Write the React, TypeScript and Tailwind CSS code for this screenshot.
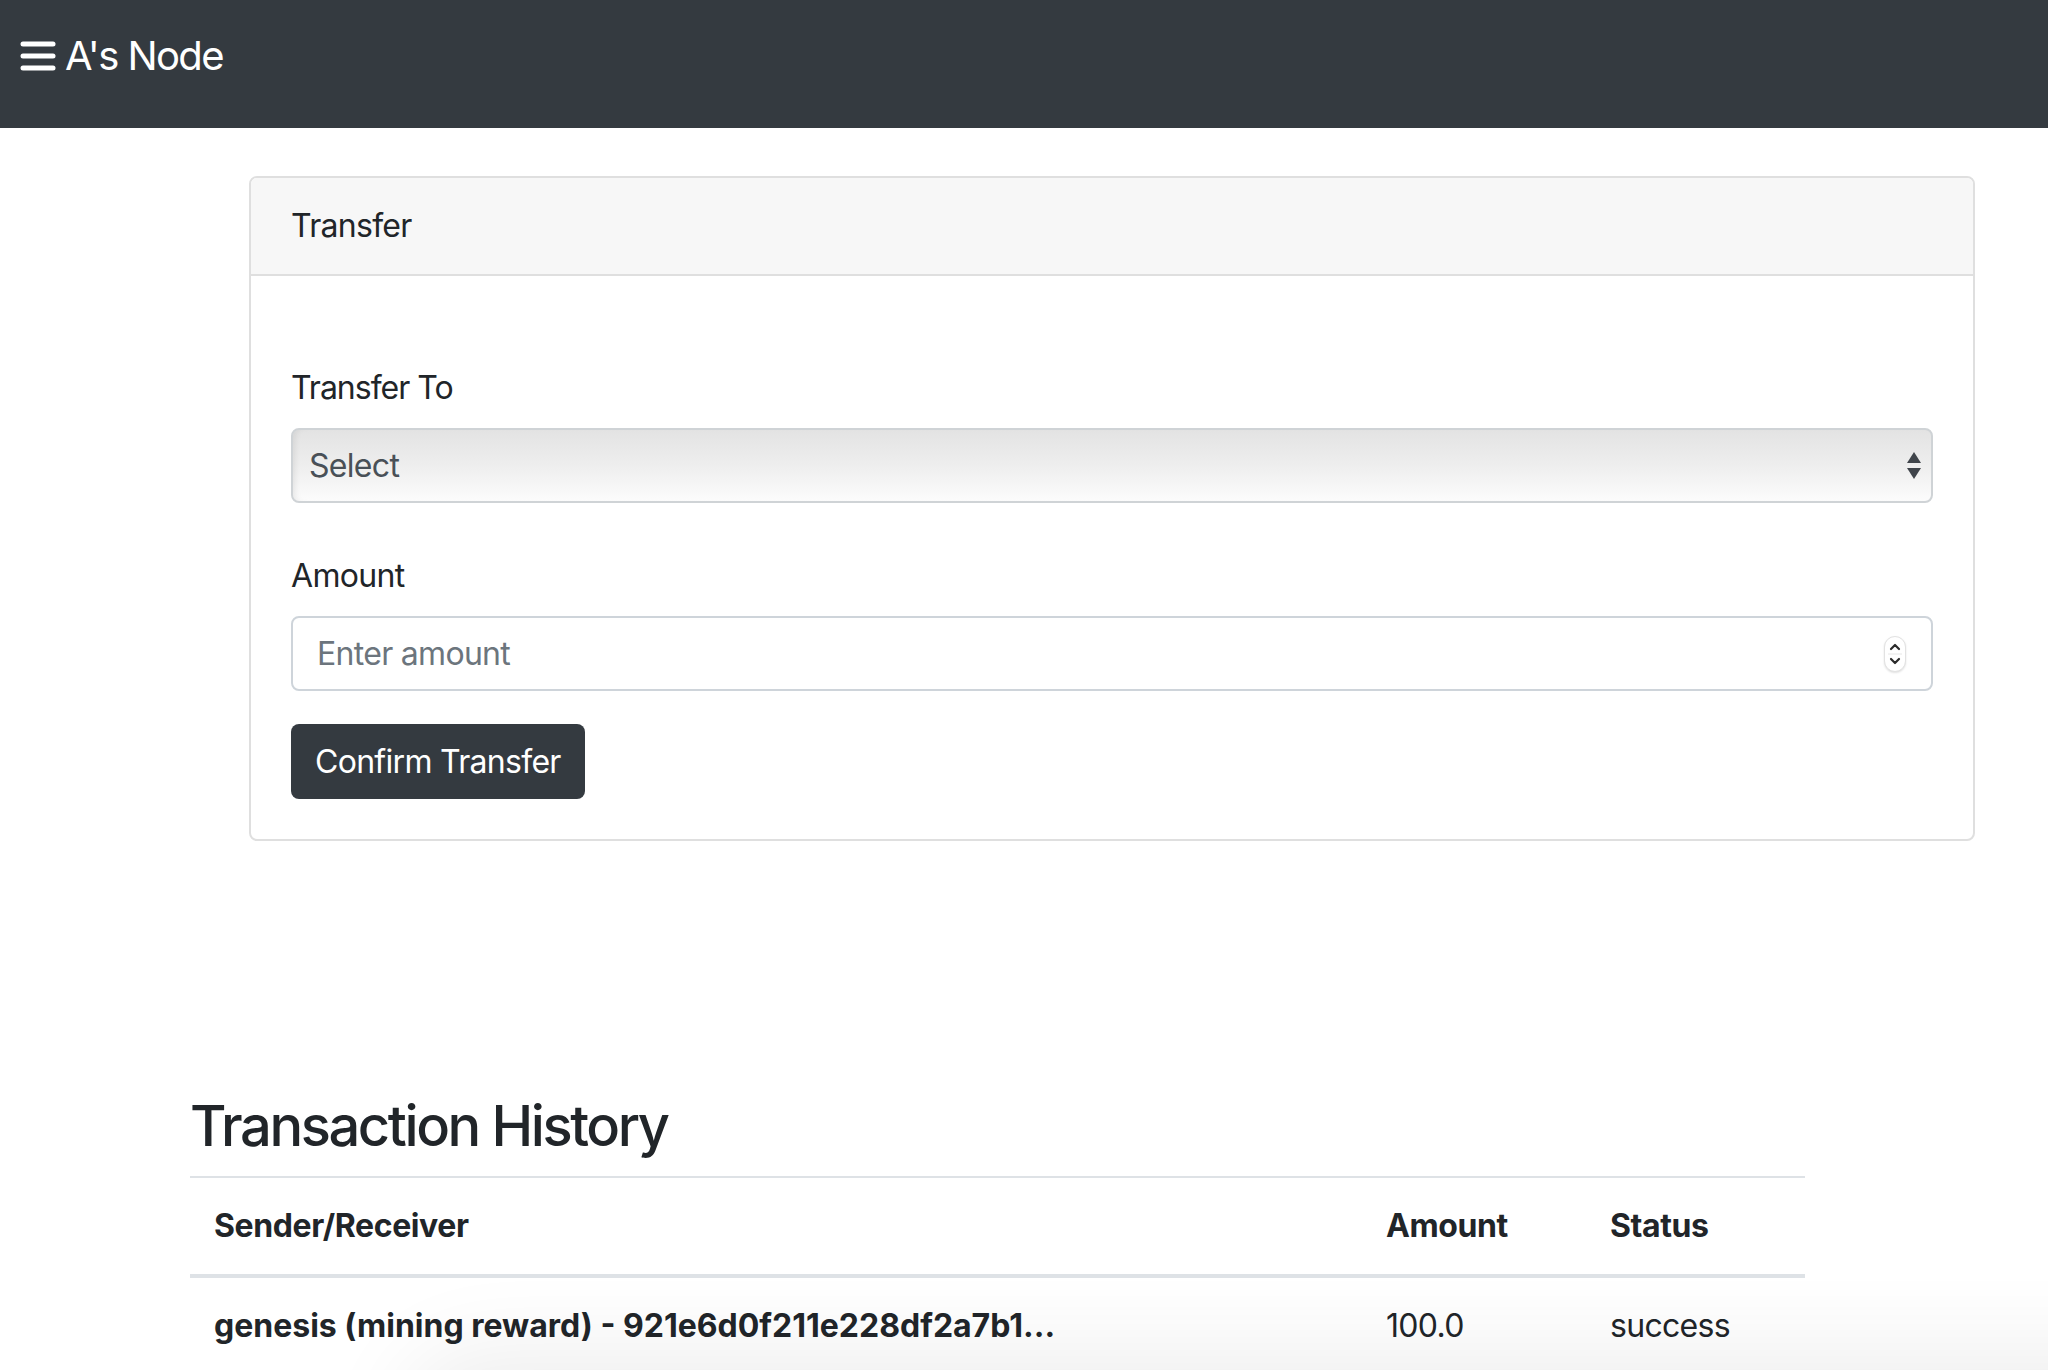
import React from 'react';

const font = "font-['Inter','Liberation_Sans',sans-serif]";

const MenuIcon = () => (
  <svg width="36" height="30" viewBox="0 0 36 30" className="shrink-0">
    <g stroke="white" strokeWidth="5" strokeLinecap="round">
      <line x1="3" y1="3" x2="33" y2="3" />
      <line x1="3" y1="15" x2="33" y2="15" />
      <line x1="3" y1="27" x2="33" y2="27" />
    </g>
  </svg>
);

const SelectArrows = () => (
  <svg width="16" height="30" viewBox="0 0 16 30" className="shrink-0">
    <polygon points="8,1 15,12 1,12" fill="#40454b" />
    <polygon points="1,17 15,17 8,28" fill="#40454b" />
  </svg>
);

const Spinner = () => (
  <div className="flex h-[36px] w-[22px] flex-col items-center justify-center rounded-[11px] border border-[#e2e2e2] bg-white shadow-[0_1px_2px_rgba(0,0,0,0.12)]">
    <svg width="14" height="30" viewBox="0 0 14 30">
      <g fill="none" stroke="#2a2a2a" strokeWidth="2.2" strokeLinecap="round" strokeLinejoin="round">
        <polyline points="3,10 7,6 11,10" />
        <polyline points="3,20 7,24 11,20" />
      </g>
      <line x1="0" y1="15" x2="14" y2="15" stroke="#e6e6e6" strokeWidth="1" />
    </svg>
  </div>
);

export default function App() {
  return (
    <div className={`relative h-[1370px] overflow-hidden bg-white text-[#212529] tracking-[-0.7px] ${font}`}>
      {/* Navbar */}
      <nav className="h-[128px] bg-[#343a40] pl-[20px] pt-[26px]">
        <div className="flex items-center gap-[9px]">
          <MenuIcon />
          <span className="text-[40px] leading-[60px] tracking-[-1.6px] text-white">A's Node</span>
        </div>
      </nav>

      {/* Transfer card */}
      <div className="ml-[249px] mt-[48px] w-[1726px] rounded-lg border-2 border-[#dfdfdf]">
        <div className="rounded-t-[6px] border-b-2 border-[#dfdfdf] bg-[#f7f7f7] px-[40px] py-[24px] text-[32px] leading-[48px]">
          Transfer
        </div>
        <div className="px-[40px] pb-[40px] pt-[88px]">
          <label className="mb-[16px] block text-[32px] leading-[48px] tracking-[-1px]">Transfer To</label>
          <div className="flex h-[75px] items-center justify-between rounded-lg border-2 border-[#cfd3d6] bg-gradient-to-b from-[#e3e3e3] via-[#eeeeee] to-[#fcfcfc] pl-[16px] pr-[9px] shadow-[inset_6px_0_6px_-4px_rgba(0,0,0,0.08)]">
            <span className="text-[32px] text-[#495057]">Select</span>
            <SelectArrows />
          </div>

          <label className="mb-[16px] mt-[49px] block text-[32px] leading-[48px]">Amount</label>
          <div className="flex h-[75px] items-center rounded-lg border-2 border-[#ced4da] bg-white pl-[24px] pr-[25px]">
            <input
              type="text"
              placeholder="Enter amount"
              className="min-w-0 flex-1 bg-transparent text-[32px] tracking-[-0.7px] text-[#495057] outline-none placeholder:text-[#6c757d]"
            />
            <Spinner />
          </div>

          <button className="mt-[33px] flex h-[75px] items-center rounded-lg bg-[#343a40] px-[24px] text-[32px] tracking-[-0.7px] text-white">
            Confirm Transfer
          </button>
        </div>
      </div>

      {/* Transaction history */}
      <div className="ml-[190px] mt-[252px] w-[1615px]">
        <h3 className="mb-[16px] text-[56px] font-medium leading-[1.2] tracking-[-2.4px]">Transaction History</h3>
        <table className="w-full table-fixed border-collapse text-[32px]">
          <colgroup>
            <col className="w-[1172px]" />
            <col className="w-[224px]" />
            <col />
          </colgroup>
          <thead>
            <tr className="border-b-4 border-t-2 border-[#dee2e6]">
              <th className="p-[24px] text-left font-bold leading-[48px] tracking-[-0.4px]">Sender/Receiver</th>
              <th className="p-[24px] text-left font-bold leading-[48px] tracking-[-0.4px]">Amount</th>
              <th className="p-[24px] text-left font-bold leading-[48px] tracking-[-0.4px]">Status</th>
            </tr>
          </thead>
          <tbody>
            <tr>
              <td className="p-[24px] font-bold leading-[48px] tracking-[0px]">genesis (mining reward) - 921e6d0f211e228df2a7b1...</td>
              <td className="p-[24px] leading-[48px]">100.0</td>
              <td className="p-[24px] leading-[48px]">success</td>
            </tr>
          </tbody>
        </table>
      </div>

      {/* soft shadow creeping in at the bottom edge */}
      <div className="pointer-events-none absolute bottom-[-120px] left-[420px] right-[-300px] h-[120px] rounded-[80px] bg-white shadow-[0_0_90px_20px_rgba(0,0,0,0.07)]" />
    </div>
  );
}
